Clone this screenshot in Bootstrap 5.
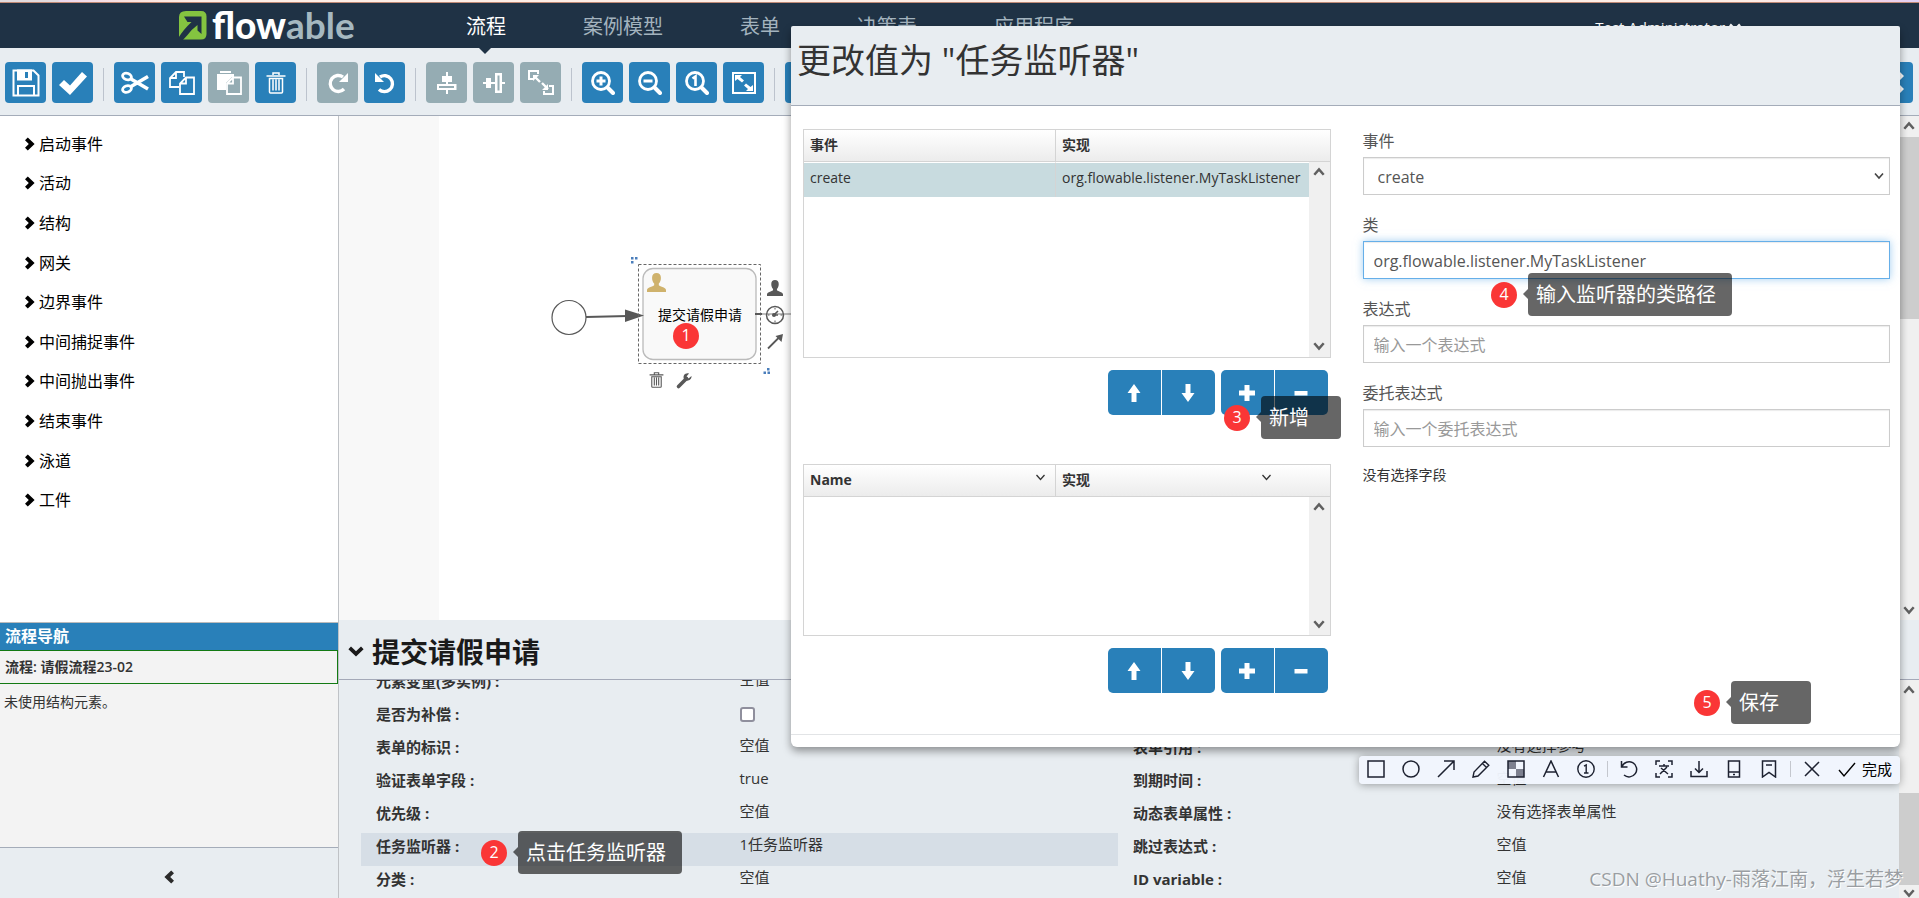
<!DOCTYPE html>
<html lang="zh-CN">
<head>
<meta charset="utf-8">
<meta name="viewport" content="width=device-width, initial-scale=1">
<title>Flowable 流程编辑器</title>
<link href="https://cdn.jsdelivr.net/npm/bootstrap@5.3.0/dist/css/bootstrap.min.css" rel="stylesheet">
<style>
  :root { --navy:#1f3245; --panel:#e8edf1; --blue:#2980b9; --mute:#95acb3; --line:#a4acb9; }
  body { font-family:"Open Sans","Noto Sans CJK SC",sans-serif; font-size:14px; line-height:20px; color:#333; background:#fff; }
  button { border:0; padding:0; }
  a { text-decoration:none; color:inherit; }
  svg { display:block; }
  .top-strip { height:3px; background:linear-gradient(90deg,#e2dcdf 0,#e2dcdf 58px,#ecd9f0 60px,#fbe3e0 130px,#fdeee6 200px,#fdeee6 1750px,#f9d5e6 1860px,#e0d0f5); border-bottom:1px solid #c08a76; }
  .main-nav { height:45px; background:var(--navy); padding-left:178px; }
  .brand-mark { margin-right:5px; }
  .brand-text { font-family:Lato,sans-serif; font-weight:700; font-size:37px; line-height:43px; color:#fff; width:254px; }
  .brand-text b { font-weight:900; }
  .brand-text span { color:#a5b8c0; }
  .nav-tabs-row { gap:77px; font-size:20px; line-height:47px; color:#a3b3be; }
  .nav-tabs-row .current { color:#fff; position:relative; }
  .nav-tabs-row .current::after { content:""; position:absolute; top:45px; left:13px; border:6px solid transparent; border-top-color:var(--navy); border-bottom:0; }
  .user-menu { color:#fff; font-size:15px; line-height:49px; margin-right:178px; }
  .tool-bar { height:68px; background:var(--panel); border-bottom:1px solid var(--line); padding:14px 6px 0 5px; gap:6px; }
  .tool-btn { width:41px; height:41px; border-radius:4px; background:var(--blue); color:#fff; display:grid; place-items:center; flex:none; }
  .tool-btn:disabled { background:var(--mute); color:#fff; }
  .tool-sep { width:1px; height:33px; background:#bcc3cd; margin:6px 4px 0; flex:none; }
  .side { width:339px; border-right:1px solid #bfc2c6; flex:none; }
  .palette-list { height:396px; margin:8px 0 0; padding-left:25px; grid-auto-rows:1fr; color:#000; font-size:16px; align-items:center; }
  .palette-list a { gap:4px; }
  .nav-box { height:226px; background:#f3f3f3; border-bottom:1px solid var(--line); }
  .nav-box h2 { height:28px; line-height:27px; font-size:16px; font-weight:700; background:var(--blue); color:#fff; padding-left:5px; margin:0; border-top:1px solid #bbb; }
  .nav-proc { height:34px; line-height:32px; border:1px solid #137a13; border-left:0; padding-left:5px; font-weight:600; }
  .side-foot { height:50px; background:var(--panel); padding:8px 0 0 164px; color:#2b2b2b; }
  .canvas-wrap { background:linear-gradient(90deg,#f8f8f8 100px,#fff 100px); overflow:hidden; }
  .vbar { width:20px; background:#f0f0f0; flex:none; color:#606060; padding:5px 0; }
  .vbar .thumb { background:#cdcdcd; }
  .vbar svg { margin:0 auto; flex:none; }
  .props { height:278px; background:var(--panel); flex:none; }
  .props-title { height:60px; border-bottom:1px solid #a4a9b8; padding:4px 0 0 9px; gap:8px; color:#1a1a1a; }
  .props-title h1 { font-size:28px; line-height:40px; font-weight:700; margin:0; }
  .props-body { height:218px; overflow:hidden; font-size:15px; padding:0 4px 0 22px; }
  .props-body .cols { margin-top:-12px; padding-right:20px; }
  .prop { height:33px; }
  .prop > .key { padding-left:15px; font-weight:700; line-height:27px; font-size:15px; }
  .prop > .val { line-height:23px; }
  .prop.on { background:#d6dee6; }
  .prop input { width:15px; height:15px; margin:6px 0 0; border:2px solid #8f8f9d; border-radius:3px; background:#fff; appearance:none; display:block; }
  .sheet { position:absolute; left:791px; right:19px; top:26px; background:#fff; border-radius:6px; box-shadow:0 4px 9px rgba(0,0,0,.4); overflow:visible; }
  .sheet-head { height:80px; background:var(--panel); border-bottom:1px solid var(--line); padding:9px 6px; border-radius:2px 2px 0 0; }
  .sheet-head h3 { font-size:34px; line-height:50px; font-weight:400; margin:0; }
  .sheet-body { grid-template-columns:1fr 1fr; column-gap:32px; padding:23px 10px 41px 12px; }
  .sheet-foot { height:13px; border-top:1px solid #e2e4e6; }
  .grid-box { position:relative; border:1px solid #d4d4d4; }
  .grid-box table { width:100%; table-layout:fixed; border-collapse:separate; border-spacing:0; }
  .grid-box th { height:32px; padding:0 6px 2px; font-weight:700; border-bottom:1px solid #d4d4d4; background:linear-gradient(#fff,#ececec); }
  .grid-box th:first-child { width:252px; border-right:1px solid #d4d4d4; }
  .grid-box td { height:35px; padding:0 6px 4px; background:#c8dbdf; border-top:1px solid #fff; }
  .grid-box td:first-child { border-right:1px solid #d4d4d4; }
  .grid-box .vbar { position:absolute; right:0; top:32px; bottom:0; width:21px; padding-bottom:6px; }
  .events-grid { height:229px; }
  .fields-grid { height:172px; margin-top:49px; }
  .fields-grid th:last-child { padding-right:59px; }
  .act-row { gap:6px; padding-right:3px; margin-top:12px; }
  .act-row .pair { border-radius:5px; overflow:hidden; gap:1px; }
  .act-row button { width:53px; height:45px; background:var(--blue); color:#fff; display:grid; place-items:center; }
  .fld { margin-bottom:18px; color:#555; font-size:16px; }
  .fld label { display:block; line-height:24px; margin-bottom:4px; }
  .fld input, .fld select { width:100%; height:38px; border:1px solid #ccc; border-radius:0; padding:2px 10px 0; color:#555; font-size:16px; background-color:#fff; box-shadow:inset 0 1px 1px rgba(0,0,0,.08); display:block; }
  .fld select { padding:2px 14px 0; appearance:none; background:#fff url("data:image/svg+xml,%3Csvg xmlns='http://www.w3.org/2000/svg' width='10' height='8'%3E%3Cpath d='M1 1.5l4 4.5 4-4.5' fill='none' stroke='%23444' stroke-width='1.6'/%3E%3C/svg%3E") no-repeat right 5px center; }
  .fld input::placeholder { color:#999; opacity:1; }
  .fld input.active-field { border-color:#66afe9; box-shadow:inset 0 1px 1px rgba(0,0,0,.08),0 0 8px rgba(102,175,233,.6); }
  .note { position:absolute; gap:11px; align-items:center; display:flex; z-index:5; }
  .note b { width:26px; height:26px; border-radius:50%; background:#fa3636; color:#fff; font-weight:400; font-size:16px; line-height:24px; text-align:center; flex:none; }
  .note span { position:relative; height:43px; line-height:44px; border-radius:4px; background:rgba(0,0,0,.6); color:#fff; font-size:20px; padding:0 16px 0 8px; white-space:nowrap; }
  .note span::before { content:""; position:absolute; left:-5px; top:16px; border:5px solid transparent; border-right-color:rgba(0,0,0,.6); border-left:0; }
  .note .roomy { padding-right:32px; }
  .n1 { left:334px; top:207px; } .n2 { left:481px; top:831px; } .n3 { left:433px; top:370px; }
  .n4 { left:700px; top:247px; } .n5 { right:89px; top:655px; }
  .snip { position:absolute; right:19px; top:756px; height:28px; background:rgba(241,245,253,.97); border-radius:4px; box-shadow:0 1px 8px rgba(0,0,0,.35); padding:0 8px 2px 8px; color:#1d2130; display:flex; align-items:center; gap:17px; }
  .snip button { background:none; color:inherit; width:18px; height:18px; flex:none; }
  .snip i { width:1px; height:16px; background:#c4c7ce; margin:0 -5px 0 -5px; }
  .snip .done { display:flex; width:auto; gap:6px; font-size:15px; line-height:18px; color:#000; }
  .watermark { position:absolute; right:16px; top:864px; font-size:19px; line-height:30px; color:#9a9ea2; text-shadow:1px 1px 0 #fff; }
</style>
</head>
<body class="vh-100 d-flex flex-column overflow-hidden position-relative">
<svg width="0" height="0" class="position-absolute">
  <defs>
    <symbol id="chev-r" viewBox="0 0 10 14"><path d="M0 3.2L2.8.4 9.6 7l-6.8 6.6L0 10.8 3.8 7z" fill="currentColor"/></symbol>
    <symbol id="up" viewBox="0 0 12 9"><path d="M1.3 7.8L6 2.4l4.700 5.400" fill="none" stroke="currentColor" stroke-width="2.500"/></symbol>
    <symbol id="down" viewBox="0 0 12 9"><path d="M1.300 1.200L6 6.600l4.700-5.400" fill="none" stroke="currentColor" stroke-width="2.500"/></symbol>
    <symbol id="a-up" viewBox="0 0 14 18"><path d="M7 0l6.500 9H9.500v9h-5V9H.5z" fill="currentColor"/></symbol>
    <symbol id="a-down" viewBox="0 0 14 18"><path d="M7 18L.5 9h4V0h5v9h4z" fill="currentColor"/></symbol>
    <symbol id="plus" viewBox="0 0 16 16"><path d="M5.500 0h5v5.500H16v5h-5.500V16h-5v-5.500H0v-5h5.500z" fill="currentColor"/></symbol>
    <symbol id="minus" viewBox="0 0 16 16"><path d="M1.500 6h13v4.500h-13z" fill="currentColor"/></symbol>
    <symbol id="trash" viewBox="0 0 20 22"><path d="M7 3V1h6v2M.5 4h19M3.500 6.500h13V20q0 1-1 1h-11q-1 0-1-1zM7 7.500v11M10 7.500v11M13 7.500v11" fill="none" stroke="currentColor" stroke-width="1.500"/></symbol>
    <symbol id="person" viewBox="0 0 18 18"><path d="M9 0c2.600 0 4.200 1.600 4.200 4.500 0 2.200-.7 4.300-2 5.500v1.500c0 .8 6.800 2 6.800 4.500v2H0v-2c0-2.500 6.800-3.700 6.800-4.500V10c-1.300-1.200-2-3.300-2-5.500C4.800 1.600 6.400 0 9 0z" fill="currentColor"/></symbol>
    <symbol id="lens" viewBox="0 0 24 24"><circle cx="10" cy="10" r="8.500" fill="none" stroke="currentColor" stroke-width="2.800"/><path d="M16.500 16.500l5.500 5.500" stroke="currentColor" stroke-width="4" stroke-linecap="round"/></symbol>
  </defs>
</svg>

<div class="top-strip flex-shrink-0"></div>
<header class="main-nav d-flex flex-shrink-0">
  <svg class="brand-mark align-self-center" width="29" height="31" viewBox="0 0 29 31"><path d="M8 1h15q5.500 0 5.500 5.500V24q0 5.500-5.500 5.500H4.500L1 27V7q0-6 7-6z" fill="#84c440"/><path d="M6 6.500h17.500V24l-4-3.500V15Q14 19 9.500 25L4 31H0v-2.500Q5 20 13.500 12H9.500z" fill="#1f3245"/></svg>
  <a href="#" class="brand-text"><b>flow</b><span>able</span></a>
  <nav class="nav-tabs-row d-flex">
    <a href="#" class="current">流程</a><a href="#">案例模型</a><a href="#">表单</a><a href="#">决策表</a><a href="#">应用程序</a>
  </nav>
  <a href="#" class="user-menu ms-auto">Test Administrator <svg class="d-inline-block align-baseline" width="12" height="11" viewBox="0 0 12 11"><path d="M1 2.500l5 5 5-5" fill="none" stroke="currentColor" stroke-width="2.500"/></svg></a>
</header>

<div class="tool-bar d-flex flex-shrink-0">
  <button class="tool-btn" aria-label="保存"><svg width="28" height="28" viewBox="0 0 28 28" fill="none" stroke="currentColor" stroke-width="2"><path d="M1.500 1.500h20l5 5v20h-25z"/><path d="M6 1.500h13v9H6z" fill="currentColor"/><path d="M14.500 3v6" stroke="#2980b9" stroke-width="3"/><path d="M6 26v-9h16v9"/></svg></button>
  <button class="tool-btn" aria-label="验证"><svg width="28" height="24" viewBox="0 0 28 24"><path d="M0 14l5-5 6 5.500L23 1l5 4.500L11 24z" fill="currentColor"/></svg></button>
  <span class="tool-sep"></span>
  <button class="tool-btn" aria-label="剪切"><svg width="28" height="24" viewBox="0 0 28 24" fill="none" stroke="currentColor" stroke-width="2.800"><ellipse cx="6" cy="5.500" rx="4.500" ry="3.200" transform="rotate(20 6 5.500)"/><ellipse cx="6" cy="18" rx="4.500" ry="3.200" transform="rotate(-20 6 18)"/><path d="M10 8l17 10M10 15.500l17-10" stroke-width="3.600"/></svg></button>
  <button class="tool-btn" aria-label="复制"><svg width="26" height="26" viewBox="0 0 26 26" fill="none" stroke="currentColor" stroke-width="1.800"><path d="M10 17H1V8l6-6h8v5M7 2v6H1"/><path d="M17 7.500h8V24H11V13.500zM17 7.500v6h-6"/></svg></button>
  <button class="tool-btn" disabled aria-label="粘贴"><svg width="26" height="26" viewBox="0 0 26 26"><path d="M1 4h17v3h-2l-6 6v7H1z" fill="currentColor"/><path d="M4 2h11" stroke="currentColor" stroke-width="2"/><path d="M17 7.500h8V24H11V13.500zM17 7.500v6h-6" fill="none" stroke="currentColor" stroke-width="1.800"/></svg></button>
  <button class="tool-btn" aria-label="删除"><svg width="20" height="22"><use href="#trash"/></svg></button>
  <span class="tool-sep"></span>
  <button class="tool-btn" disabled aria-label="重做"><svg width="22" height="22" viewBox="0 0 22 22"><path d="M17 17a8 8 0 1 1-1-12" fill="none" stroke="currentColor" stroke-width="3.400"/><path d="M21 1v9h-9z" fill="currentColor"/></svg></button>
  <button class="tool-btn" aria-label="撤销"><svg width="22" height="22" viewBox="0 0 22 22"><path d="M5 17.500a8 8 0 1 0 1-12.500" fill="none" stroke="currentColor" stroke-width="3.400"/><path d="M1 1v9h9z" fill="currentColor"/></svg></button>
  <span class="tool-sep"></span>
  <button class="tool-btn" disabled aria-label="垂直对齐"><svg width="22" height="22" viewBox="0 0 22 22"><path d="M10 0h2v4h4v6h-4v2h8.500v6H12v4h-2v-4H1v-6h9v-2H6V4h4z" fill="currentColor"/><path d="M3 14h15v2H3z" fill="#95acb3"/></svg></button>
  <button class="tool-btn" disabled aria-label="水平对齐"><svg width="22" height="22" viewBox="0 0 22 22"><path d="M0 10h3V6h5v4h4V1h7v9h3v2h-3v9h-7v-9H8v4H3v-4H0z" fill="currentColor"/><path d="M14.500 3.500h2v15h-2z" fill="#95acb3"/></svg></button>
  <button class="tool-btn" disabled aria-label="同等大小"><svg width="26" height="26" viewBox="0 0 26 26" fill="none" stroke="currentColor" stroke-width="2"><path d="M5 9H1V1h9v3M21 16h4v8h-9v-3"/><path d="M6 6l6 6M14 13l6 6" stroke-width="2.400"/><path d="M5 5h6l-6 6zM20 20h-6l6-6z" fill="currentColor" stroke="none"/></svg></button>
  <span class="tool-sep"></span>
  <button class="tool-btn" aria-label="放大"><svg width="24" height="24"><use href="#lens"/><path d="M10 5.500v9M5.500 10h9" stroke="#fff" stroke-width="3"/></svg></button>
  <button class="tool-btn" aria-label="缩小"><svg width="24" height="24"><use href="#lens"/><path d="M5.500 10h9" stroke="#fff" stroke-width="3"/></svg></button>
  <button class="tool-btn" aria-label="实际大小"><svg width="24" height="24"><use href="#lens"/><path d="M7.500 7.500L10.500 5.500V15" fill="none" stroke="#fff" stroke-width="2.600"/></svg></button>
  <button class="tool-btn" aria-label="适应屏幕"><svg width="24" height="22" viewBox="0 0 24 22"><path d="M1 1h22v20H1z" fill="none" stroke="currentColor" stroke-width="2"/><path d="M3 3h7L8 5l4 3.500-2 2L5.500 7 3 9zM21 19h-7l2-2-4-3.500 2-2L18.500 15l2.500-2z" fill="currentColor"/></svg></button>
  <span class="tool-sep"></span>
  <button class="tool-btn" aria-label="连线"></button>
  <button class="tool-btn ms-auto" aria-label="关闭"><svg width="23" height="23" viewBox="0 0 23 23"><path d="M4 0l7 7 7-7 5 5-6.500 6.500L23 18l-5 5-7-7-7 7-4-5 6.500-6.500L0 5z" fill="currentColor"/></svg></button>
</div>

<div class="d-flex flex-grow-1" style="min-height:0">
  <aside class="side d-flex flex-column">
    <ul class="palette-list list-unstyled d-grid">
      <li><a href="#" class="d-flex align-items-center"><svg width="10" height="14"><use href="#chev-r"/></svg>启动事件</a></li>
      <li><a href="#" class="d-flex align-items-center"><svg width="10" height="14"><use href="#chev-r"/></svg>活动</a></li>
      <li><a href="#" class="d-flex align-items-center"><svg width="10" height="14"><use href="#chev-r"/></svg>结构</a></li>
      <li><a href="#" class="d-flex align-items-center"><svg width="10" height="14"><use href="#chev-r"/></svg>网关</a></li>
      <li><a href="#" class="d-flex align-items-center"><svg width="10" height="14"><use href="#chev-r"/></svg>边界事件</a></li>
      <li><a href="#" class="d-flex align-items-center"><svg width="10" height="14"><use href="#chev-r"/></svg>中间捕捉事件</a></li>
      <li><a href="#" class="d-flex align-items-center"><svg width="10" height="14"><use href="#chev-r"/></svg>中间抛出事件</a></li>
      <li><a href="#" class="d-flex align-items-center"><svg width="10" height="14"><use href="#chev-r"/></svg>结束事件</a></li>
      <li><a href="#" class="d-flex align-items-center"><svg width="10" height="14"><use href="#chev-r"/></svg>泳道</a></li>
      <li><a href="#" class="d-flex align-items-center"><svg width="10" height="14"><use href="#chev-r"/></svg>工件</a></li>
    </ul>
    <section class="nav-box mt-auto">
      <h2>流程导航</h2>
      <div class="nav-proc">流程: 请假流程23-02</div>
      <div class="px-1 pt-2 mt-0">未使用结构元素。</div>
    </section>
    <div class="side-foot d-flex align-items-center"><svg width="10" height="14" viewBox="0 0 10 14"><path d="M10 3.200L7.200.4.400 7l6.800 6.600L10 10.800 6.200 7z" fill="currentColor"/></svg></div>
  </aside>

  <main class="flex-grow-1 d-flex flex-column" style="min-width:0">
    <div class="canvas-wrap flex-grow-1 d-flex justify-content-between position-relative">
      <svg width="452" height="300" viewBox="339 116 452 300" fill="none" stroke="#585858">
        <circle cx="569" cy="317.500" r="17" stroke-width="1.200"/>
        <path d="M586 317l42-1" stroke-width="2.200"/><rect x="643" y="268.500" width="113" height="91" rx="10" fill="#f9f9f9" stroke="#bbb" stroke-width="1.300"/>
        <path d="M625 309.500l19 6-19 6.500z" fill="#585858" stroke="none"/>
        <rect x="638.500" y="264.500" width="122" height="99" stroke="#666" stroke-dasharray="3 2"/>
        <path d="M755 314h7" stroke-width="2"/><path d="M762 314h29" stroke="#aaa" stroke-width="1.500"/>
        <text x="658" y="320" font-size="14" fill="#000" stroke="none">提交请假申请</text>
        <g fill="#4a7ebb" stroke="none"><path d="M631 257h2.500v2.500H631zM635 257h2.500v2.500H635zM631 261h2.500v2.500H631zM767 368h2.500v2.500H767zM763.500 371.500h2.500v2.500h-2.500zM767.500 371.500h2.500v2.500h-2.500z"/></g>
        <use href="#person" x="647" y="273" width="19" height="19" color="#cfb26c" stroke="none"/>
        <use href="#person" x="767" y="280" width="16" height="16" color="#585858" stroke="none"/>
        <circle cx="775" cy="315" r="8.500" stroke-width="1.500"/><path d="M778 311l-4 4h4" stroke-width="1.600"/><circle cx="774" cy="315" r="2" fill="#585858" stroke="none"/><path d="M775 308v1.500M775 320.500v2M768 315h1.500M780.500 315h2"/>
        <path d="M768 348.500l12-12" stroke-width="1.800"/><path d="M783 334l-1.500 8-6-6z" fill="#585858" stroke="none"/>
        <use href="#trash" x="649" y="372" width="15" height="16" color="#585858" stroke="none"/>
        <path d="M678.500 386.500l8-8" stroke-width="3.600" stroke-linecap="round"/><path d="M691.500 376l-3 2.500-2-2 2.500-3c-4-1-6.500 2.500-5 5.500 2.500 3.500 8 1 7.500-3z" fill="#585858" stroke="none"/>
      </svg>
      <div class="note n1"><b>1</b></div>
      <div class="vbar d-flex flex-column justify-content-between">
        <svg width="12" height="9"><use href="#up"/></svg>
        <div class="thumb w-100 mb-auto" style="height:182px;margin-top:7px"></div>
        <svg width="12" height="9"><use href="#down"/></svg>
      </div>
    </div>
    <section class="props">
      <div class="props-title d-flex align-items-center"><svg width="16" height="11" viewBox="0 0 16 11"><path d="M3 .5L8 5.200 13 .5l2.600 2.700L8 10.600.4 3.200z" fill="currentColor"/></svg><h1>提交请假申请</h1></div>
      <div class="d-flex">
        <div class="props-body flex-grow-1">
          <div class="row g-0 cols">
            <div class="col-6">
              <div class="row g-0 prop"><div class="col-6 key">元素变量(多实例) :</div><div class="col-6 val">空值</div></div>
              <div class="row g-0 prop"><label class="col-6 key" for="comp">是否为补偿 :</label><div class="col-6 val"><input type="checkbox" id="comp"></div></div>
              <div class="row g-0 prop"><div class="col-6 key">表单的标识 :</div><div class="col-6 val">空值</div></div>
              <div class="row g-0 prop"><div class="col-6 key">验证表单字段 :</div><div class="col-6 val">true</div></div>
              <div class="row g-0 prop"><div class="col-6 key">优先级 :</div><div class="col-6 val">空值</div></div>
              <div class="row g-0 prop on"><div class="col-6 key">任务监听器 :</div><div class="col-6 val">1任务监听器</div></div>
              <div class="row g-0 prop"><div class="col-6 key">分类 :</div><div class="col-6 val">空值</div></div>
            </div>
            <div class="col-6">
              <div class="prop"></div><div class="prop"></div>
              <div class="row g-0 prop"><div class="col-6 key">表单引用 :</div><div class="col-6 val">没有选择参考</div></div>
              <div class="row g-0 prop"><div class="col-6 key">到期时间 :</div><div class="col-6 val">空值</div></div>
              <div class="row g-0 prop"><div class="col-6 key">动态表单属性 :</div><div class="col-6 val">没有选择表单属性</div></div>
              <div class="row g-0 prop"><div class="col-6 key">跳过表达式 :</div><div class="col-6 val">空值</div></div>
              <div class="row g-0 prop"><div class="col-6 key">ID variable :</div><div class="col-6 val">空值</div></div>
            </div>
          </div>
        </div>
        <div class="vbar d-flex flex-column justify-content-between pb-0">
          <svg width="12" height="9"><use href="#up"/></svg>
          <div class="thumb w-100 mt-auto mb-1" style="height:92px"></div>
          <svg width="12" height="9"><use href="#down"/></svg>
        </div>
      </div>
    </section>
  </main>
</div>

<div class="note n2"><b>2</b><span>点击任务监听器</span></div>

<section class="sheet" role="dialog" aria-labelledby="dlg">
  <div class="sheet-head"><h3 id="dlg">更改值为 "任务监听器"</h3></div>
  <div class="sheet-body d-grid">
    <div>
      <div class="grid-box events-grid">
        <table><thead><tr><th>事件</th><th>实现</th></tr></thead><tbody><tr><td>create</td><td>org.flowable.listener.MyTaskListener</td></tr></tbody></table>
        <div class="vbar d-flex flex-column justify-content-between"><svg width="12" height="9"><use href="#up"/></svg><svg width="12" height="9"><use href="#down"/></svg></div>
      </div>
      <div class="act-row d-flex justify-content-end">
        <div class="pair d-flex"><button aria-label="上移"><svg width="14" height="18"><use href="#a-up"/></svg></button><button aria-label="下移"><svg width="14" height="18"><use href="#a-down"/></svg></button></div>
        <div class="pair d-flex"><button aria-label="新增"><svg width="16" height="16"><use href="#plus"/></svg></button><button aria-label="移除"><svg width="16" height="16"><use href="#minus"/></svg></button></div>
      </div>
      <div class="grid-box fields-grid">
        <table><thead><tr>
          <th><div class="d-flex justify-content-between">Name<svg class="mt-1 me-1" width="9" height="7" viewBox="0 0 9 7"><path d="M.5 1l4 4.500 4-4.500" fill="none" stroke="#333" stroke-width="1.300"/></svg></div></th>
          <th><div class="d-flex justify-content-between">实现<svg class="mt-1" width="9" height="7" viewBox="0 0 9 7"><path d="M.5 1l4 4.500 4-4.500" fill="none" stroke="#333" stroke-width="1.300"/></svg></div></th>
        </tr></thead></table>
        <div class="vbar d-flex flex-column justify-content-between"><svg width="12" height="9"><use href="#up"/></svg><svg width="12" height="9"><use href="#down"/></svg></div>
      </div>
      <div class="act-row d-flex justify-content-end">
        <div class="pair d-flex"><button aria-label="上移字段"><svg width="14" height="18"><use href="#a-up"/></svg></button><button aria-label="下移字段"><svg width="14" height="18"><use href="#a-down"/></svg></button></div>
        <div class="pair d-flex"><button aria-label="新增字段"><svg width="16" height="16"><use href="#plus"/></svg></button><button aria-label="移除字段"><svg width="16" height="16"><use href="#minus"/></svg></button></div>
      </div>
    </div>
    <form>
      <div class="fld"><label for="ev">事件</label><select id="ev"><option>create</option></select></div>
      <div class="fld"><label for="cls">类</label><input id="cls" class="active-field" type="text" value="org.flowable.listener.MyTaskListener"></div>
      <div class="fld"><label for="exp">表达式</label><input id="exp" type="text" placeholder="输入一个表达式"></div>
      <div class="fld"><label for="del">委托表达式</label><input id="del" type="text" placeholder="输入一个委托表达式"></div>
      <div>没有选择字段</div>
    </form>
  </div>
  <div class="sheet-foot"></div>
  <div class="note n3"><b>3</b><span class="roomy">新增</span></div>
  <div class="note n4"><b>4</b><span>输入监听器的类路径</span></div>
  <div class="note n5"><b>5</b><span class="roomy">保存</span></div>
</section>

<div class="snip" role="toolbar">
  <button aria-label="矩形"><svg width="18" height="18" fill="none" stroke="currentColor" stroke-width="1.500"><path d="M1 1h16v16H1z"/></svg></button>
  <button aria-label="椭圆"><svg width="18" height="18" fill="none" stroke="currentColor" stroke-width="1.500"><circle cx="9" cy="9" r="8"/></svg></button>
  <button aria-label="箭头"><svg width="18" height="18" fill="none" stroke="currentColor" stroke-width="1.500"><path d="M1 17L17 1M7 1h10v9"/></svg></button>
  <button aria-label="画笔"><svg width="18" height="18" fill="none" stroke="currentColor" stroke-width="1.400"><path d="M1 17l1-5L12.500 1.200l4.300 4L6 16zM10.500 3.500l4 4"/></svg></button>
  <button aria-label="马赛克"><svg width="18" height="18" fill="none" stroke="currentColor" stroke-width="1.500"><path d="M1 1h8v8H1zM9 9h8v8H9z" fill="#7d808f" stroke="none"/><path d="M1 1h16v16H1z"/></svg></button>
  <button aria-label="文字"><svg width="18" height="18" fill="none" stroke="currentColor" stroke-width="1.500"><path d="M1.500 17L9 1l7.500 16M4 12h10"/></svg></button>
  <button aria-label="序号"><svg width="18" height="18" fill="none" stroke="currentColor" stroke-width="1.400"><circle cx="9" cy="9" r="8.200"/><path d="M7 6.200L9.200 5v8M7 13h4.500"/></svg></button>
  <i></i>
  <button aria-label="撤销标注"><svg width="18" height="18" fill="none" stroke="currentColor" stroke-width="1.500"><path d="M1.500 1v6h6M2 6.500a7.600 7.600 0 1 1 2 8.500"/></svg></button>
  <button aria-label="翻译"><svg width="18" height="18" fill="none" stroke="currentColor" stroke-width="1.500"><path d="M1 5V1h4M13 1h4v4M17 13v4h-4M5 17H1v-4M4 6h10M9 4v2M5 14l7-7M6 8l7 6"/></svg></button>
  <button aria-label="下载"><svg width="18" height="18" fill="none" stroke="currentColor" stroke-width="1.500"><path d="M9 1v11M5 8.500l4 4 4-4M1 11v5.500h16V11"/></svg></button>
  <button aria-label="发送到手机"><svg width="18" height="18" fill="none" stroke="currentColor" stroke-width="1.500"><path d="M3.500 1h11v16h-11zM3.500 12h11M8 14.500h2"/></svg></button>
  <button aria-label="收藏"><svg width="18" height="18" fill="none" stroke="currentColor" stroke-width="1.500"><path d="M2.500 1h13v16L9 12.500 2.500 17zM6 5h6"/></svg></button>
  <i></i>
  <button aria-label="取消"><svg width="18" height="18" fill="none" stroke="currentColor" stroke-width="1.500"><path d="M2 2l14 14M16 2L2 16"/></svg></button>
  <button class="done"><svg width="18" height="18" fill="none" stroke="currentColor" stroke-width="1.400"><path d="M1 10l5 6L17 3"/></svg>完成</button>
</div>
<div class="watermark">CSDN @Huathy-雨落江南，浮生若梦</div>
<script src="https://cdn.jsdelivr.net/npm/bootstrap@5.3.0/dist/js/bootstrap.bundle.min.js"></script>
</body>
</html>
